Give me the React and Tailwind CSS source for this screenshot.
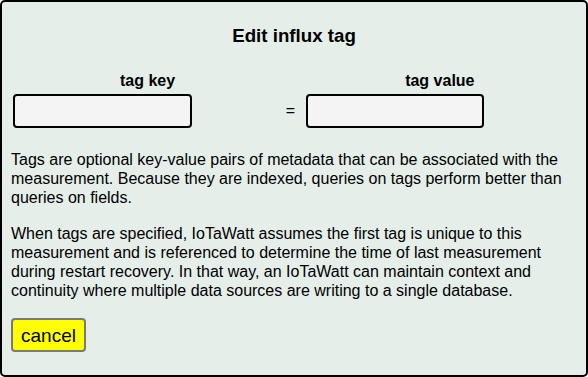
import { useState } from "react";

const EditTagDialog = ({ onCancel }) => {
  const [tagKey, setTagKey] = useState("");
  const [tagValue, setTagValue] = useState("");

  return (
    <div className="w-[588px] h-[377px] box-border border-2 border-black rounded-[5px] bg-[#e5eee9] px-[9px] text-black font-['Liberation_Sans',Arial,sans-serif] overflow-hidden">
      <h3 className="mt-[22.5px] text-center text-[18.72px] leading-[21.5px] font-bold">
        Edit influx tag
      </h3>

      {/* labels sit off-centre above their inputs, like the original table */}
      <div className="mt-[25px] flex text-[16px] leading-[19px] font-bold">
        <span className="ml-[109px]">tag key</span>
        <span className="ml-[230px]">tag value</span>
      </div>

      <div className="mt-[4px] ml-[2px] flex items-center">
        <input
          className="w-[179px] h-[34px] box-border border-2 border-black rounded-[4px] bg-[#f4f4f4] px-1 text-[16px] outline-none"
          value={tagKey}
          onChange={(e) => setTagKey(e.target.value)}
        />
        <span className="w-[114px] pr-[11px] text-right text-[16px]">=</span>
        <input
          className="w-[178px] h-[34px] box-border border-2 border-black rounded-[4px] bg-[#f4f4f4] px-1 text-[16px] outline-none"
          value={tagValue}
          onChange={(e) => setTagValue(e.target.value)}
        />
      </div>

      <p className="mt-[22px] text-[16px] leading-[19.2px]">
        Tags are optional key-value pairs of metadata that can be associated with the
        measurement. Because they are indexed, queries on tags perform better than
        queries on fields.
      </p>
      <p className="mt-[16px] text-[16px] leading-[19.2px]">
        When tags are specified, IoTaWatt assumes the first tag is unique to this
        measurement and is referenced to determine the time of last measurement during
        restart recovery. In that way, an IoTaWatt can maintain context and continuity
        where multiple data sources are writing to a single database.
      </p>

      <button
        className="mt-[18px] h-[34px] box-border px-[8px] border-2 border-[#7a7a7a] rounded-[4px] bg-[#ffff00] text-[19px] leading-none text-black"
        onClick={onCancel}
      >
        cancel
      </button>
    </div>
  );
};

export default function App() {
  return <EditTagDialog onCancel={() => console.log("cancel")} />;
}
